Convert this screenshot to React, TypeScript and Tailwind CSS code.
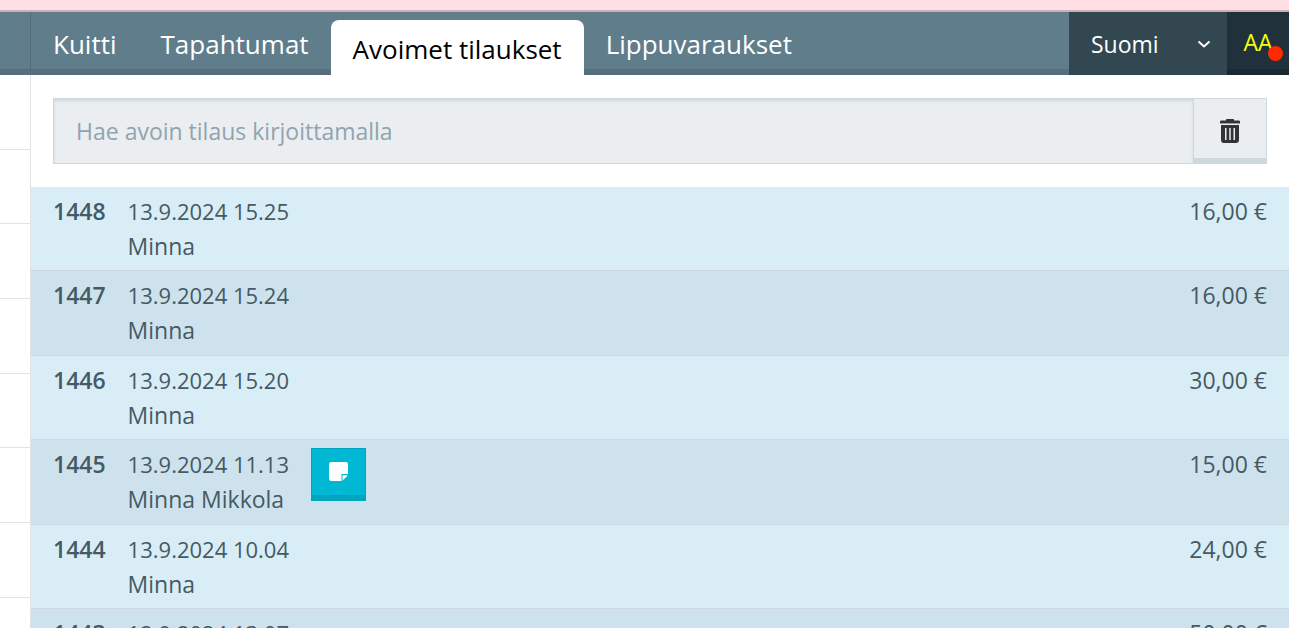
import React from "react";

type Order = {
  id: string;
  date: string;
  customer: string;
  total: string;
  hasNote?: boolean;
};

const orders: Order[] = [
  { id: "1448", date: "13.9.2024 15.25", customer: "Minna", total: "16,00 €" },
  { id: "1447", date: "13.9.2024 15.24", customer: "Minna", total: "16,00 €" },
  { id: "1446", date: "13.9.2024 15.20", customer: "Minna", total: "30,00 €" },
  { id: "1445", date: "13.9.2024 11.13", customer: "Minna Mikkola", total: "15,00 €", hasNote: true },
  { id: "1444", date: "13.9.2024 10.04", customer: "Minna", total: "24,00 €" },
  { id: "1443", date: "12.9.2024 13.07", customer: "Minna", total: "50,00 €" },
];

const tabs = ["Kuitti", "Tapahtumat", "Avoimet tilaukset", "Lippuvaraukset"];
const activeTab = "Avoimet tilaukset";

function TrashIcon() {
  return (
    <svg viewBox="0 0 22 24" className="h-6 w-[22px]" aria-hidden="true">
      <path
        fill="#333"
        fillRule="evenodd"
        d="M7 0.500Q7 0 8 0h6Q15 0 15 0.500V1.500h4.500Q21 1.500 21 2.500V4H1V2.500Q1 1.500 2.500 1.500H7zM2 6h18v15a3 3 0 0 1-3 3H5a3 3 0 0 1-3-3zM6 9v12h1.500V9zM10.250 9v12h1.500V9zM14.500 9v12H16V9z"
      />
      <path fill="#9a9c9e" d="M1 4h20v1H1z" />
    </svg>
  );
}

function NoteIcon() {
  return (
    <svg viewBox="0 0 20 20" className="size-5" aria-hidden="true">
      <path fill="#fff" d="M2.500 0h14.500A2 2 0 0 1 19 2V12h-6.500v7h-10A2.500 2.500 0 0 1 0 16.500v-14A2.500 2.500 0 0 1 2.500 0z" />
      <path fill="#fff" d="M13.500 13.300H19L13.500 18.800z" />
    </svg>
  );
}

function OrderRow({ order }: { order: Order }) {
  return (
    <li className="flex min-h-[84px] items-start gap-[22px] border-b border-[#cdd8df] bg-[#d9edf6] px-[22px] pt-[7px] text-[23px] leading-[35px] text-[#455a64] even:min-h-[85px] even:bg-[#cee2ed]">
      <span className="font-semibold">{order.id}</span>
      <div>
        <div className="text-[22px]">{order.date}</div>
        <div>{order.customer}</div>
      </div>
      {order.hasNote && (
        <button
          type="button"
          aria-label="Muistiinpano"
          className="mt-px flex h-[53px] w-[55px] items-center justify-center border border-b-6 border-[#00a5c0] bg-[#00b8d4]"
        >
          <NoteIcon />
        </button>
      )}
      <span className="ml-auto">{order.total}</span>
    </li>
  );
}

export default function App() {
  return (
    <div className="flex h-screen flex-col overflow-hidden bg-white font-['Open_Sans','Noto_Sans',sans-serif]">
      <div className="h-3 shrink-0 border-b-2 border-[#cbb0b8] bg-[#ffdfe5]" />
      <header className="flex h-[63px] shrink-0 bg-[#607d8b]">
        <div className="w-[31px] shrink-0 border-r border-b-6 border-r-[#526c79] border-b-[#576f7c]" />
        <nav className="flex grow border-b-6 border-[#576f7c] text-[26px] whitespace-nowrap">
          {tabs.map((tab) =>
            tab === activeTab ? (
              <a
                key={tab}
                href="#"
                aria-current="page"
                className="mt-2 -mb-[6px] flex items-center rounded-t-lg bg-white px-[22px] pt-1 text-black"
              >
                {tab}
              </a>
            ) : (
              <a key={tab} href="#" className="flex items-center px-[22px] pt-2 text-white">
                {tab}
              </a>
            ),
          )}
        </nav>
        <div className="relative flex w-[158px] shrink-0">
          <select
            aria-label="Kieli"
            defaultValue="Suomi"
            className="w-full appearance-none bg-[#334750] pt-0.5 pl-[22px] text-[23px] text-white"
          >
            <option>Suomi</option>
          </select>
          <svg viewBox="0 0 14 8" className="pointer-events-none absolute top-7 right-4 h-2 w-3.5" aria-hidden="true">
            <path d="M1.500 1.500 7 6.500 12.500 1.500" fill="none" stroke="#fff" strokeWidth="2" />
          </svg>
        </div>
        <button
          type="button"
          className="relative w-[62px] shrink-0 border-b-6 border-[#1a2832] bg-[#20313c] pt-1 text-[23px] text-[#f4ff10]"
        >
          AA
          <span className="absolute right-1.5 bottom-2 size-[15px] rounded-full bg-[#ff2a00]" />
        </button>
      </header>
      <div className="flex min-h-0 grow">
        <div className="w-[31px] shrink-0 border-r border-[#e1e3e5]">
          {Array.from({ length: 7 }, (_, i) => (
            <div key={i} className="h-[75px] border-b border-[#e1e3e5] nth-[3n+2]:h-[74px]" />
          ))}
        </div>
        <main className="min-w-0 grow">
          <form className="mx-[22px] my-[23px] flex h-[66px]">
            <input
              type="text"
              aria-label="Hae avoin tilaus"
              placeholder="Hae avoin tilaus kirjoittamalla"
              className="min-w-0 grow border border-r-0 border-[#cfd8dc] bg-[#eaeef1] px-[22px] text-[23px] text-[#455a64] shadow-[inset_0_2px_3px_#cfd8dc] placeholder:text-[#90a4ae]"
            />
            <button
              type="button"
              aria-label="Tyhjennä"
              className="flex w-[74px] shrink-0 items-center justify-center border border-b-6 border-[#cfd8dc] bg-[#eaeef1] pt-1"
            >
              <TrashIcon />
            </button>
          </form>
          <ul>
            {orders.map((order) => (
              <OrderRow key={order.id} order={order} />
            ))}
          </ul>
        </main>
      </div>
    </div>
  );
}
